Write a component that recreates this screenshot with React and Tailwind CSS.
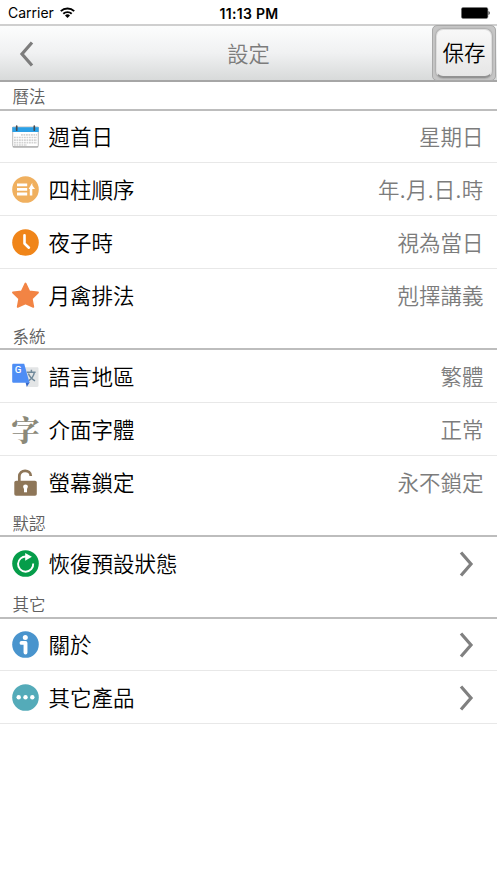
const GLYPH_FONT = "font-['Noto_Sans_CJK_TC',sans-serif] font-[350]";

function CalendarIcon() {
  return (
    <svg viewBox="0 0 27 27" className="size-[27px]">
      <path d="M.7 4v18.7c0 .8.5 1.3 1.3 1.3h23c.8 0 1.3-.5 1.3-1.3V4z" fill="#fff" stroke="#a9a9a9" strokeWidth=".8" />
      <path d="M.3 4.2h26.4V9H.3z" fill="#2ba0e6" />
      <path d="M.8 23.9h25.4" stroke="#999" strokeWidth=".9" />
      <g stroke="#d2d2d2" strokeWidth="1.7" strokeDasharray="1.8 .7">
        <path d="M9 11.8h16M2 14.5h23M2 17.1h23M2 19.7h23" />
        <path d="M2 22h13" />
      </g>
      <path d="M4.7 3.2v4M22.3 3.2v4" stroke="#454b50" strokeWidth="1.7" strokeLinecap="round" />
    </svg>
  );
}

function PillarsIcon() {
  return (
    <svg viewBox="0 0 27 27" className="size-[27px]">
      <circle cx="13.5" cy="13.5" r="13.3" fill="#f0b05f" />
      <path d="M5 8.8h10.2M5 13.4h10.2M5 18h10.2" stroke="#fff" strokeWidth="2.8" />
      <path d="M16.6 12.9 20.3 6.8v12.7h-2.5v-6.6z" fill="#fff" />
      <path d="m19.5 8.2 3.5 4.7h-3.5z" fill="#fff" />
    </svg>
  );
}

function ClockIcon() {
  return (
    <svg viewBox="0 0 27 27" className="size-[27px]">
      <circle cx="13.5" cy="13.5" r="13.3" fill="#f08519" />
      <path d="M12.5 6.3v8.2l4.4 4.2" fill="none" stroke="#fff" strokeWidth="2.6" strokeLinecap="round" strokeLinejoin="round" />
    </svg>
  );
}

function StarIcon() {
  return (
    <svg viewBox="0 0 27 27" className="size-[27px]">
      <path
        d="m13.5 1.5 3.8 7.8 8.7 1.2-6.2 6.1 1.5 8.2-7.800-3.300-7.800 3.300 1.500-8.200L1 10.500l8.700-1.200z"
        fill="#f28444"
        stroke="#f28444"
        strokeWidth="1.8"
        strokeLinejoin="round"
      />
    </svg>
  );
}

function TranslateIcon() {
  return (
    <svg viewBox="0 0 27 27" className="size-[27px]">
      <path d="M12 4.200h13.200c.7 0 1.300.5 1.300 1.200v17.400c0 .7-.6 1.200-1.300 1.200H15z" fill="#e3e5e6" />
      <path
        d="M14.800 9.200h8.800M19.400 6.800v2.400M22.400 9.400c-.8 3.800-3.200 6.800-6 8.400M16.400 10.600c1.200 3.200 3.400 5.600 6.600 7.200"
        fill="none"
        stroke="#70899a"
        strokeWidth="1.5"
      />
      <path d="M13.500 19.200h4.200L14.800 24z" fill="#3467c9" />
      <path d="M1.500.7h10.700l5.300 19h-16C.8 19.700.2 19.200.2 18.400V2C.2 1.200.8.7 1.500.7z" fill="#4e8df5" />
      <text x="2.800" y="10.300" fontSize="9.800" fontWeight="500" fill="#fff" fontFamily="Roboto, sans-serif">G</text>
    </svg>
  );
}

function FontIcon() {
  return (
    <span className="flex size-[27px] items-center justify-center font-['Noto_Serif_CJK_TC','Noto_Sans_CJK_TC',serif] text-[28px] leading-none font-black text-[#8b8979]">
      字
    </span>
  );
}

function UnlockIcon() {
  return (
    <svg viewBox="0 0 27 27" className="size-[27px]">
      <path d="M7.3 13V7.600c0-7.600 11.500-7.600 11.500-.6" fill="none" stroke="#8e7658" strokeWidth="2.7" />
      <rect x="2.3" y="11.7" width="22.5" height="15" rx="1.8" fill="#8e7658" />
      <circle cx="13.5" cy="17.8" r="2.4" fill="#fff" />
      <path d="M12 18.500h3v4.800h-3z" fill="#fff" />
    </svg>
  );
}

function ResetIcon() {
  return (
    <svg viewBox="0 0 27 27" className="size-[27px]">
      <circle cx="13.5" cy="13.5" r="13.3" fill="#069d4a" />
      <path d="M14.500 6.600A7.600 7.600 0 1 0 21.200 13.500" fill="none" stroke="#fff" strokeWidth="1.9" />
      <path d="m13.200 3 6.700 3.800-6.700 4z" fill="#fff" />
    </svg>
  );
}

function InfoIcon() {
  return (
    <svg viewBox="0 0 27 27" className="size-[27px]">
      <circle cx="13.5" cy="13.5" r="13.3" fill="#4994cd" />
      <circle cx="13.3" cy="6.6" r="2.5" fill="#fff" />
      <path d="M9.500 11.900h4v9.600" fill="none" stroke="#fff" strokeWidth="3.9" strokeLinejoin="round" strokeLinecap="round" />
    </svg>
  );
}

function MoreIcon() {
  return (
    <svg viewBox="0 0 27 27" className="size-[27px]">
      <circle cx="13.5" cy="13.5" r="13.3" fill="#54abb9" />
      <g fill="#fff">
        <circle cx="6.7" cy="13.3" r="2.2" />
        <circle cx="13.5" cy="13.3" r="2.2" />
        <circle cx="20.3" cy="13.3" r="2.2" />
      </g>
    </svg>
  );
}

const SECTIONS = [
  {
    title: "曆法",
    rows: [
      { icon: CalendarIcon, label: "週首日", value: "星期日" },
      { icon: PillarsIcon, label: "四柱順序", value: "年.月.日.時", spaced: true },
      { icon: ClockIcon, label: "夜子時", value: "視為當日" },
      { icon: StarIcon, label: "月禽排法", value: "剋擇講義" },
    ],
  },
  {
    title: "系統",
    rows: [
      { icon: TranslateIcon, label: "語言地區", value: "繁體" },
      { icon: FontIcon, label: "介面字體", value: "正常" },
      { icon: UnlockIcon, label: "螢幕鎖定", value: "永不鎖定" },
    ],
  },
  {
    title: "默認",
    rows: [{ icon: ResetIcon, label: "恢復預設狀態" }],
  },
  {
    title: "其它",
    rows: [
      { icon: InfoIcon, label: "關於" },
      { icon: MoreIcon, label: "其它產品" },
    ],
    closed: true,
  },
];

function StatusBar() {
  return (
    <div className="grid h-6 grid-cols-3 items-center pt-px pr-[7px] pl-2 font-['Inter',sans-serif] text-[14px] font-normal text-black">
      <div className="flex items-center gap-[6px]">
        <span>Carrier</span>
        <svg viewBox="0 0 15 11" className="h-[11px] w-[15px]">
          <g fill="none" stroke="#000" strokeWidth="1.9">
            <path d="M.8 4.200a9.500 9.500 0 0 1 13.400 0" />
            <path d="M3.300 6.800a6 6 0 0 1 8.400 0" />
          </g>
          <path d="M7.500 11 5 8.500a3.600 3.600 0 0 1 5 0z" />
        </svg>
      </div>
      <span className="pt-px text-center text-[14px] font-semibold tracking-[0.3px] whitespace-nowrap">11:13 PM</span>
      <svg viewBox="0 0 29 12" className="h-3 w-[29px] justify-self-end">
        <rect x=".4" y=".4" width="26.5" height="11.2" rx="1.8" fill="#000" stroke="#777" strokeWidth=".6" />
        <path d="M27.600 4c1.400.5 1.400 3.500 0 4z" />
      </svg>
    </div>
  );
}

function Header() {
  return (
    <header className="flex h-[58px] items-center justify-between border-t-2 border-b-2 border-t-[#cfcfcf] border-b-[#a6a6a6] bg-linear-to-b from-[#fcfdfd] via-[#f0f1f2] to-[#d8dada] pr-px">
      <button className="flex w-[65px] pt-px pl-[19px]">
        <svg viewBox="0 0 15 26" className="h-[26px] w-[15px]">
          <path d="M13 1.500 3 13l10 11.500" fill="none" stroke="#7d7d7d" strokeWidth="3.2" />
        </svg>
      </button>
      <h1 className="pb-px text-[21.3px] leading-none text-[#7c7c7c]">設定</h1>
      <button className="-my-0.5 h-[56px] w-[64px] rounded-[5px] border border-[#a8a8a8] bg-[#c6c6c6] p-[3px]">
        <span className="flex h-[49px] items-center justify-center rounded-[7px] border border-b-2 border-[#dedede] border-b-[#929292] bg-linear-to-b from-[#f8f8f8] to-[#e6e6e6] pb-[3px] text-[21.5px] leading-none text-black shadow-[0_0_2px_#777]">
          保存
        </span>
      </button>
    </header>
  );
}

function Row({ icon: Icon, label, value, spaced, last }) {
  return (
    <li className={`flex h-[52.7px] items-center pl-3 ${last ? "" : "border-b border-[#e8e8e8]"}`}>
      <Icon />
      <span className="ml-[9.5px] pb-px text-[21.5px] leading-none text-black">{label}</span>
      {value ? (
        <span className={`mr-[13.5px] ml-auto pb-px text-[21.5px] leading-none text-[#7c7c7c] ${spaced ? "tracking-[0.3px]" : ""}`}>
          {value}
        </span>
      ) : (
        <svg viewBox="0 0 15 26" className="mt-px mr-[23px] ml-auto h-[26px] w-[15px]">
          <path d="M2 1.500 12 13 2 24.500" fill="none" stroke="#808080" strokeWidth="3.2" />
        </svg>
      )}
    </li>
  );
}

export default function App() {
  return (
    <div className={`min-h-screen w-full overflow-hidden bg-white ${GLYPH_FONT}`}>
      <StatusBar />
      <Header />
      {SECTIONS.map((section) => (
        <section key={section.title}>
          <h2 className="flex h-[28.8px] items-center border-b-2 border-[#bdbdbd] pt-[2.5px] pl-[12.5px] text-[16.5px] leading-none text-[#606060]">
            {section.title}
          </h2>
          <ul>
            {section.rows.map((row, i) => (
              <Row key={row.label} {...row} last={!section.closed && i === section.rows.length - 1} />
            ))}
          </ul>
        </section>
      ))}
    </div>
  );
}
